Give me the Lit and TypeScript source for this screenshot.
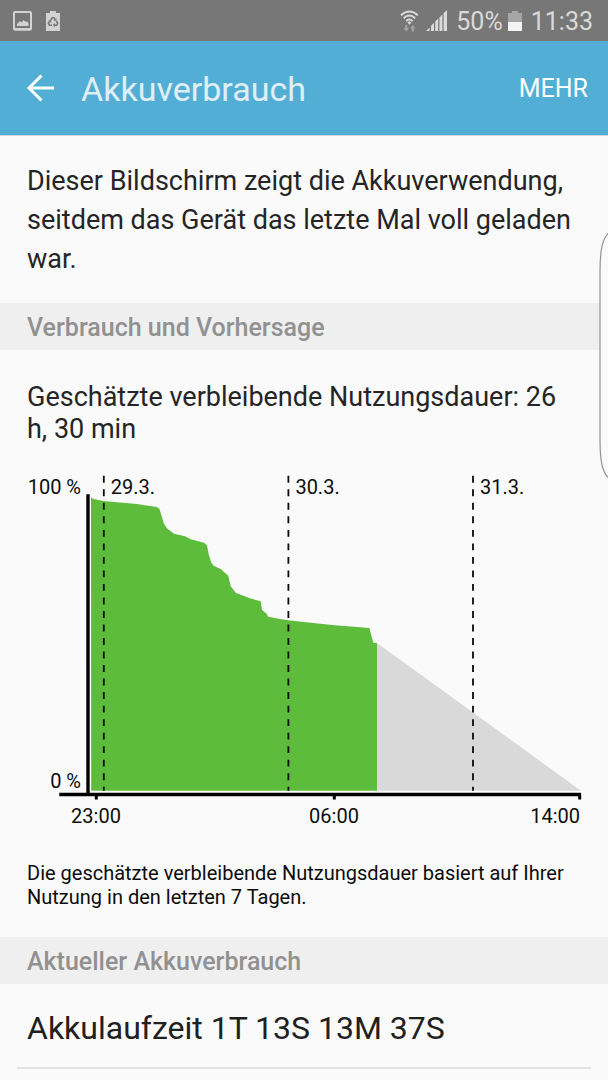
import { LitElement, html, css, svg } from "lit";
import { customElement } from "lit/decorators.js";

type Point = [number, number];

const HISTORY: Point[] = [
  [91, 497], [92.7, 498.7], [103.3, 501], [136.7, 504], [156.7, 507], [159.3, 508.7],
  [161.3, 515], [164, 524], [167, 528.3], [174, 533.7], [185, 536.3], [190.7, 539.3],
  [204, 542.7], [207, 545.3], [208.7, 554.3], [211.3, 562.7], [213.7, 565.7], [220.7, 569],
  [228.3, 575.7], [230.7, 586.3], [236, 593], [250, 598.3], [260.7, 601.3], [262, 610],
  [266.7, 613.7], [268, 616.7], [280, 619], [288.3, 620.3], [320, 623.7], [335, 625.3],
  [369.3, 628], [373.3, 642.7], [377, 643],
];
const BASE = 790.7;
const DAYS = [
  { x: 103.8, label: "29.3." },
  { x: 288.4, label: "30.3." },
  { x: 473, label: "31.3." },
];
const TICKS = [
  { x: 96.3, label: "23:00", anchor: "middle", textX: 96 },
  { x: 334.3, label: "06:00", anchor: "middle", textX: 334 },
  { x: 579.7, label: "14:00", anchor: "end", textX: 580 },
];

@customElement("battery-chart")
export class BatteryChart extends LitElement {
  static styles = css`
    :host { display: block; }
    .chart { display: block; width: 100%; height: auto; overflow: visible; }
    .label { font: 400 20px Roboto, sans-serif; fill: #0c0c0c; }
    .backing { fill: #fff; }
    .used { fill: #5dbc3c; }
    .forecast { fill: #d9d9d9; }
    .day { stroke: #0a0a0a; stroke-width: 1.8; stroke-dasharray: 6.9 6.62; }
    .axis { stroke: #000; stroke-width: 3.4; fill: none; }
    .tick { stroke: #000; stroke-width: 3; }
  `;

  render() {
    const top = HISTORY.map(([x, y]) => `${x},${y}`).join(" ");
    return html`
      <svg class="chart" viewBox="27 473 554 356" role="img" aria-label="Akkuverlauf und Vorhersage">
        <rect class="backing" x="89" y="497" width="4" height="297"></rect>
        <rect class="backing" x="89" y="790" width="492" height="3"></rect>
        <polygon class="forecast" points="377,${BASE} 377,643 581,${BASE}"></polygon>
        <polygon class="used" points="91.2,${BASE} ${top} 377,${BASE}"></polygon>
        ${DAYS.map((d) => svg`
          <line class="day" x1=${d.x} x2=${d.x} y1="475.8" y2=${BASE}></line>
          <text class="label" x=${d.x + 7} y="494">${d.label}</text>`)}
        <path class="axis" d="M88 494.3V794M59.3 794.5H581"></path>
        ${TICKS.map((t) => svg`
          <line class="tick" x1=${t.x} x2=${t.x} y1="794" y2="799.5"></line>
          <text class="label" x=${t.textX} y="823" text-anchor=${t.anchor}>${t.label}</text>`)}
        <text class="label" x="81" y="494" text-anchor="end">100 %</text>
        <text class="label" x="81" y="788" text-anchor="end">0 %</text>
      </svg>`;
  }
}

@customElement("status-bar")
export class StatusBar extends LitElement {
  static styles = css`
    :host {
      display: flex; align-items: center; justify-content: space-between;
      height: 41px; padding: 0 15px 0 13px; box-sizing: border-box;
      background: #777; color: #dadada; font-size: 25px; line-height: 32px;
    }
    .group { display: flex; align-items: center; }
    .left { gap: 13px; }
    .text { padding-top: 2px; }
    .signal { margin: 0 9px 0 7px; }
    .battery { margin: 0 9px 0 5px; }
    svg { display: block; }
  `;

  render() {
    return html`
      <div class="group left">
        <svg width="20" height="20" viewBox="0 0 20 20">
          <rect x="1" y="1" width="17" height="17.5" rx="1" fill="none" stroke="#d2d2d2" stroke-width="2"></rect>
          <path fill="#d2d2d2" d="M1 17h17v2.5H1zM4 15v-2l3-3 1.5 1.5 2-2.5L13 11l1-1 1.5 2.5V15z"></path>
        </svg>
        <svg width="14" height="20" viewBox="0 0 14 20">
          <path fill="#d2d2d2" d="M0 2h4V0h6v2h4v18H0z"></path>
          <g fill="none" stroke="#777" stroke-width="1.6">
            <path d="M4.6 9.2 6.2 6.8h1.8L9.2 8.6M10.4 10l1.3 2.2-1 2H8.4M6 14.2H3.4l-1-2L3.6 10.2"></path>
          </g>
          <path fill="#777" d="M10.4 6.8v3H7.6zM9 12v4.2l-2.2-2.1zM2 9.6l3-.4.6 2.8z"></path>
        </svg>
      </div>
      <div class="group">
        <svg width="19" height="22" viewBox="0 0 19 22">
          <g fill="none" stroke="#dadada" stroke-width="1.9">
            <path d="M1 5.2Q9.3-2 17.8 5.2M3.6 8.2Q9.3 3 15.2 8.2M6.2 11Q9.3 8.2 12.6 11"></path>
          </g>
          <path fill="#dadada" d="M7.3 12.2q2-1.5 4.2 0L9.4 14.8z"></path>
          <path fill="#a5a5a5" d="M5.200 15h2v3H9l-2.800 3.500L3.400 18h1.800zM11.800 21.500h2v-3h1.800L12.800 15 10 18.500h1.800z"></path>
        </svg>
        <svg class="signal" width="21" height="21" viewBox="0 0 21 21">
          <path fill="#dadada" d="M0 21l3.600-3.600V21zM5 21v-5.200l3-3V21zM9.200 21v-9.400l3-3V21zM13.400 21V7.400l3-3V21zM17.600 21V3.200L21 0v21z"></path>
        </svg>
        <span class="text">50%</span>
        <svg class="battery" width="14" height="20" viewBox="0 0 14 20">
          <path fill="#a6a6a6" d="M0 2h4V0h6v2h4v10H0z"></path>
          <path fill="#f4f4f4" d="M0 11h14v9H0z"></path>
        </svg>
        <time class="text">11:33</time>
      </div>`;
  }
}

@customElement("app-root")
export class AppRoot extends LitElement {
  static styles = css`
    :host {
      display: block; position: relative; min-height: 100vh; overflow: hidden;
      background: #fafafa; color: #252525; font-family: Roboto, sans-serif;
    }
    .bar {
      display: flex; align-items: center; height: 94px; padding: 0 20px 0 27px;
      background: #52aed4; border-bottom: 1px solid #cfd8dc;
    }
    button {
      border: 0; padding: 0; background: none; color: #fff;
      font: 400 25px/32px Roboto, sans-serif; cursor: pointer;
    }
    .back svg { display: block; }
    .more { padding-top: 2px; }
    .title {
      flex: 1; margin: 0 0 0 26px; padding-top: 2px; color: #e0eef5;
      font-size: 34px; font-weight: 400; line-height: 40px;
    }
    .intro { margin: 0; padding: 26px 27px 24px; font-size: 27px; line-height: 39px; }
    .section {
      margin: 0; padding: 3px 27px 0; background: #efefef; color: #919191;
      font-size: 25px; font-weight: 500; line-height: 44px;
    }
    .remaining { margin: 0; padding: 31px 27px 28px; font-size: 27px; line-height: 32px; }
    .graph { padding: 0 27px; }
    .note {
      margin: 0; padding: 32px 27px 28px; color: #0c0c0c;
      font-size: 20px; line-height: 24px;
    }
    .runtime {
      margin: 0 17px; padding: 5px 10px 0; border-bottom: 2px solid #e3e3e3;
      font-size: 32px; line-height: 78px; color: #202020;
    }
    .edge { position: absolute; top: 232px; right: 0; }
  `;

  render() {
    return html`
      <status-bar></status-bar>
      <header class="bar">
        <button class="back" aria-label="Zurück">
          <svg width="28" height="28" viewBox="0 0 28 28" fill="none" stroke="#fff" stroke-width="3">
            <path d="M14.500 1.500 2 14l12.500 12.500M2 14h25"></path>
          </svg>
        </button>
        <h1 class="title">Akkuverbrauch</h1>
        <button class="more">MEHR</button>
      </header>
      <main>
        <p class="intro">Dieser Bildschirm zeigt die Akkuverwendung, seitdem das Gerät das letzte Mal voll geladen war.</p>
        <h2 class="section">Verbrauch und Vorhersage</h2>
        <p class="remaining">Geschätzte verbleibende Nutzungsdauer: 26 h, 30 min</p>
        <div class="graph"><battery-chart></battery-chart></div>
        <p class="note">Die geschätzte verbleibende Nutzungsdauer basiert auf Ihrer Nutzung in den letzten 7 Tagen.</p>
        <h2 class="section">Aktueller Akkuverbrauch</h2>
        <p class="runtime">Akkulaufzeit 1T 13S 13M 37S</p>
      </main>
      <svg class="edge" width="9" height="247" viewBox="0 0 9 247" aria-hidden="true">
        <path fill="#fafafa" stroke="#8f9494" stroke-width="1.200" d="M9.500 1C3.500 7 1 17 1 40V207C1 230 3.500 240 9.500 246"></path>
      </svg>`;
  }
}
